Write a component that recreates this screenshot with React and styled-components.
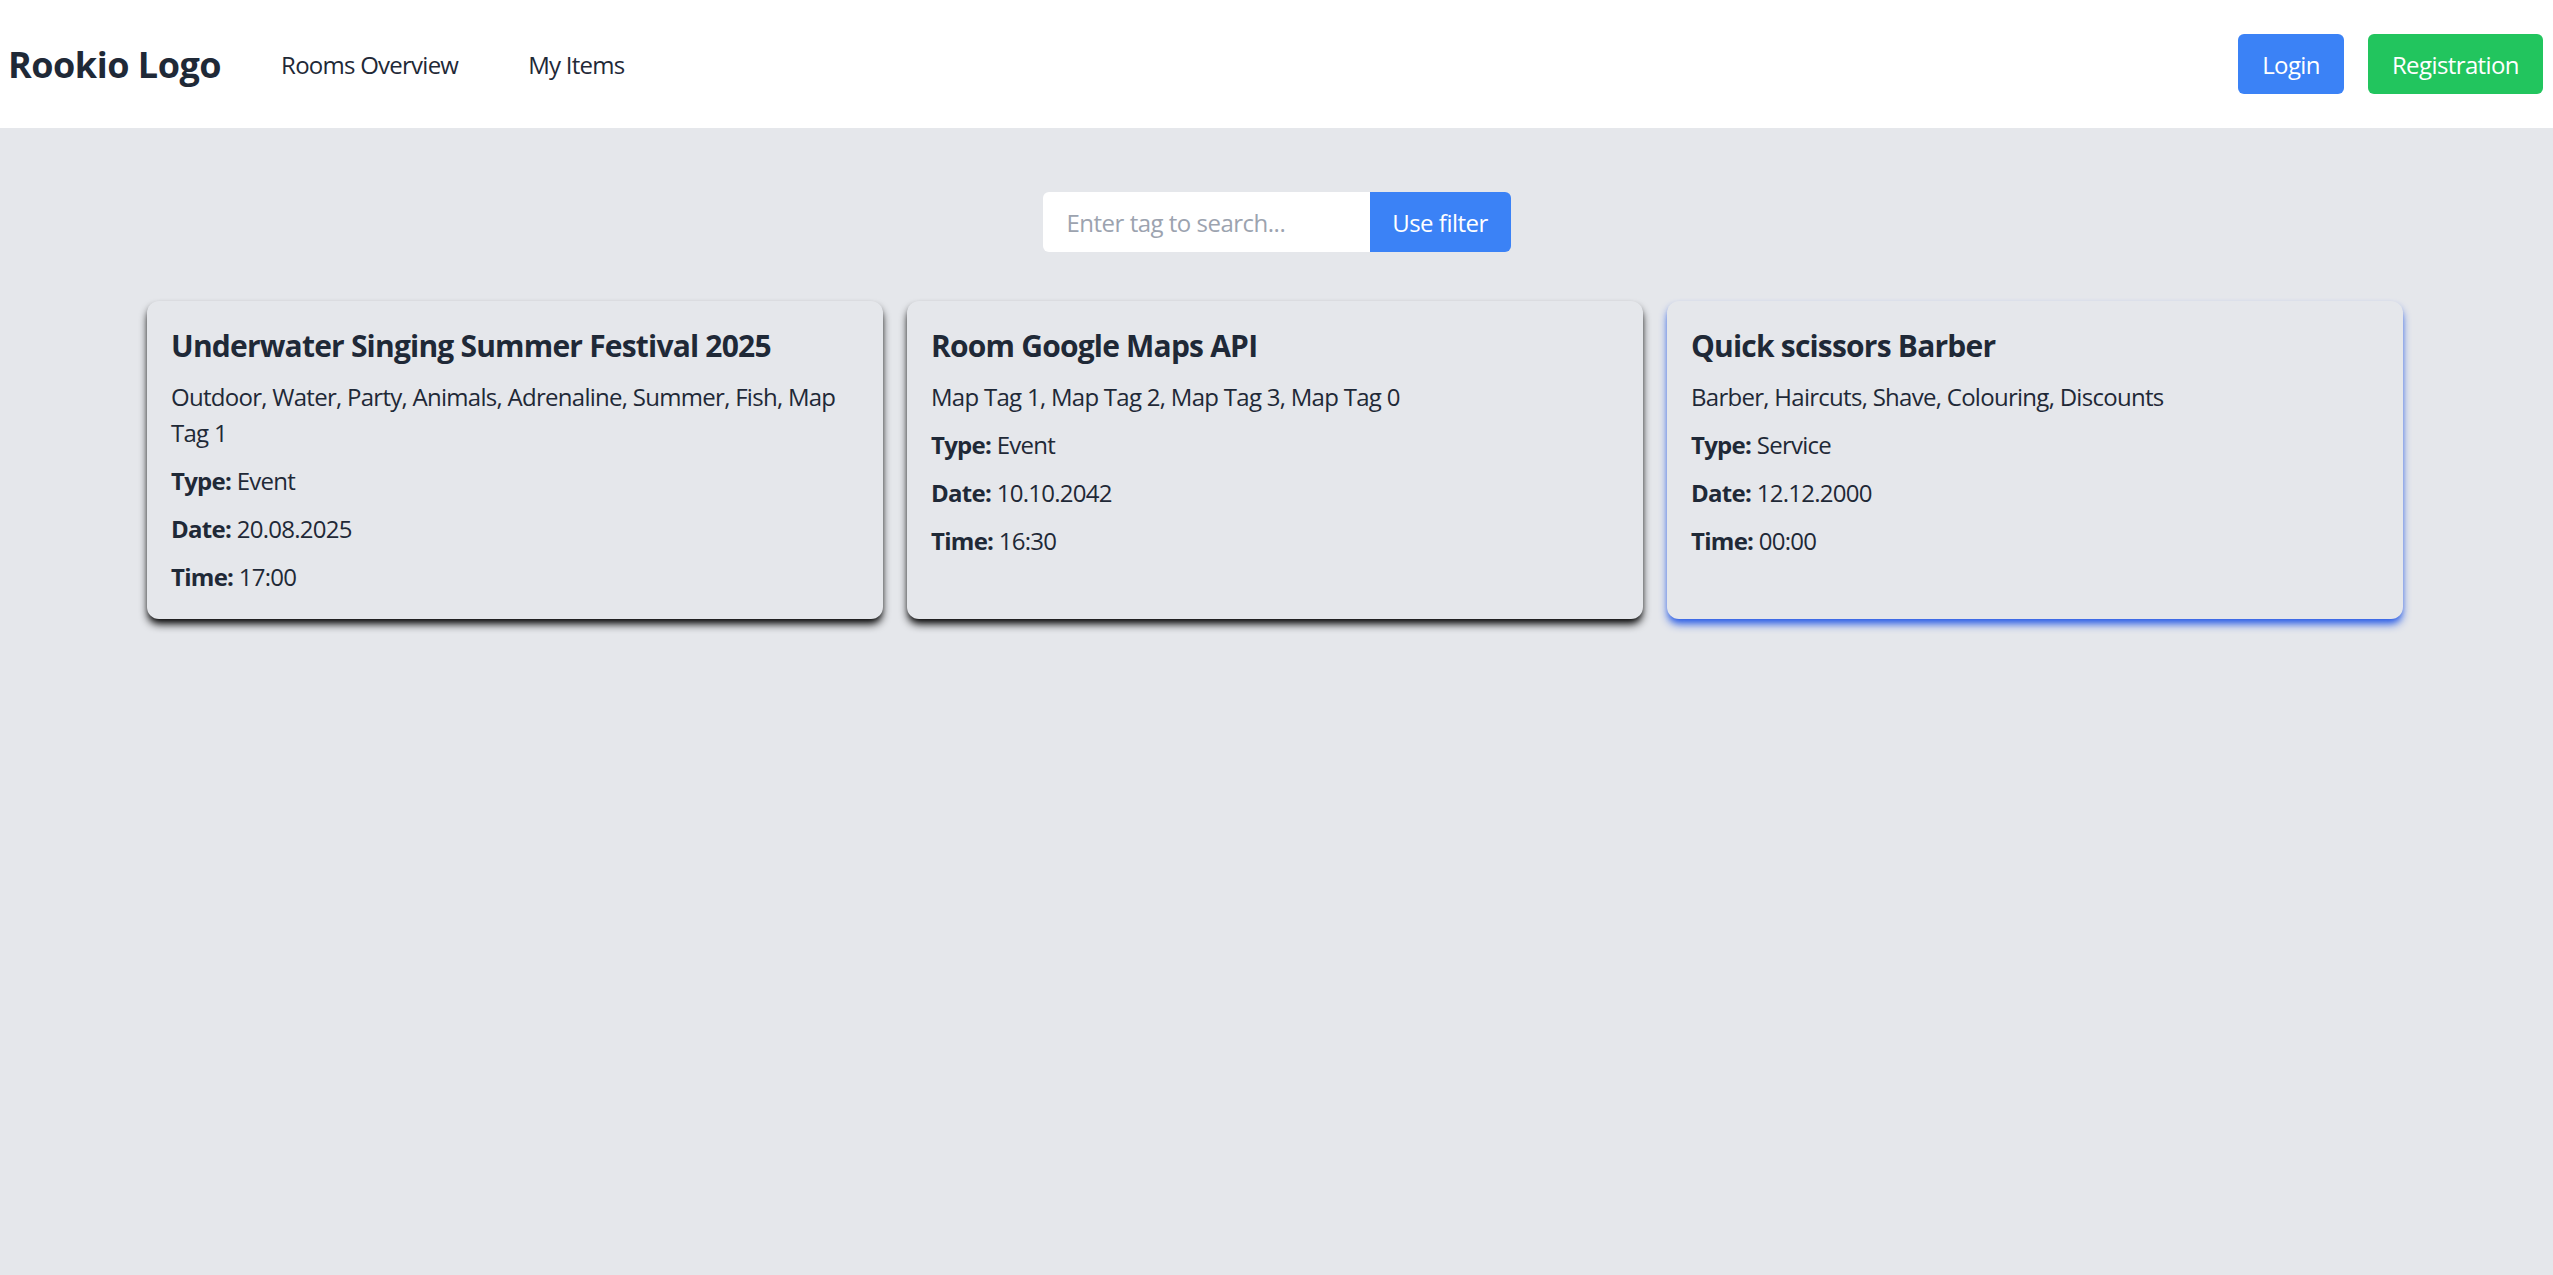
import React from 'react'
import styled, { createGlobalStyle } from 'styled-components';

const GlobalStyle = createGlobalStyle`
    html, body {
        margin: 0;
        padding: 0;
        background: #e5e7eb;
    }
    body {
        font-family: "Open Sans", "Noto Sans", sans-serif;
        color: #1f2937;
    }
    * {
        box-sizing: border-box;
    }
`;

const Page = styled.div`
    min-height: 100vh;
    background: #e5e7eb;
`;

const Header = styled.header`
    height: 128px;
    background: #ffffff;
    display: flex;
    align-items: center;
    justify-content: space-between;
    padding: 0 10px 0 8px;
`;

const Left = styled.div`
    display: flex;
    align-items: center;
`;

const Logo = styled.a`
    font-size: 36px;
    font-weight: 700;
    color: #1f2937;
    text-decoration: none;
    letter-spacing: -0.5px;
`;

const Nav = styled.nav`
    display: flex;
    gap: 70px;
    margin-left: 60px;
`;

const NavLink = styled.a`
    font-size: 24px;
    color: #1f2937;
    text-decoration: none;
    letter-spacing: -0.75px;
`;

const Right = styled.div`
    display: flex;
    gap: 24px;
`;

const Button = styled.button`
    height: 60px;
    padding: 0 24px;
    border: none;
    border-radius: 6px;
    font-family: inherit;
    font-size: 24px;
    color: #ffffff;
    background: ${props => props.$green ? '#22c55e' : '#3b82f6'};
    cursor: pointer;
    letter-spacing: -0.6px;
`;

const SearchRow = styled.div`
    display: flex;
    justify-content: center;
    margin: 64px 0 49px;
`;

const SearchInput = styled.input`
    width: 327px;
    height: 60px;
    padding: 0 24px;
    border: none;
    border-radius: 6px 0 0 6px;
    background: #ffffff;
    font-family: inherit;
    font-size: 24px;
    color: #1f2937;
    outline: none;
    letter-spacing: -0.5px;

    &::placeholder {
        color: #9ca3af;
    }
`;

const SearchButton = styled.button`
    width: 141px;
    height: 60px;
    border: none;
    border-radius: 0 6px 6px 0;
    background: #3b82f6;
    color: #ffffff;
    font-family: inherit;
    font-size: 24px;
    cursor: pointer;
    letter-spacing: -0.5px;
`;

const Grid = styled.div`
    display: grid;
    grid-template-columns: repeat(3, 1fr);
    gap: 24px;
    padding: 0 150px 0 147px;
`;

const Card = styled.div`
    background: #e5e7eb;
    border-radius: 12px;
    padding: 24px;
    box-shadow: ${props => props.$active
        ? '0 6px 9px -1.5px rgba(37, 88, 230, 0.95), 0 3px 6px -3px rgba(37, 88, 230, 0.6)'
        : '0 6px 9px -1.5px rgba(0, 0, 0, 0.95), 0 3px 6px -3px rgba(0, 0, 0, 0.6)'};
`;

const Title = styled.h2`
    margin: 0 0 12px;
    font-size: 30px;
    line-height: 42px;
    font-weight: 700;
    color: #1f2937;
    letter-spacing: -0.8px;
`;

const Line = styled.p`
    margin: 0 0 12px;
    font-size: 24px;
    line-height: 36px;
    color: #1f2937;
    letter-spacing: -0.72px;

    &:last-child {
        margin-bottom: 0;
    }
`;

const rooms = [
    {
        name: 'Underwater Singing Summer Festival 2025',
        tags: 'Outdoor, Water, Party, Animals, Adrenaline, Summer, Fish, Map Tag 1',
        type: 'Event',
        date: '20.08.2025',
        time: '17:00',
    },
    {
        name: 'Room Google Maps API',
        tags: 'Map Tag 1, Map Tag 2, Map Tag 3, Map Tag 0',
        type: 'Event',
        date: '10.10.2042',
        time: '16:30',
    },
    {
        name: 'Quick scissors Barber',
        tags: 'Barber, Haircuts, Shave, Colouring, Discounts',
        type: 'Service',
        date: '12.12.2000',
        time: '00:00',
        active: true,
    },
];

const App = () => {
    return (
        <Page>
            <GlobalStyle />
            <Header>
                <Left>
                    <Logo href="#">Rookio Logo</Logo>
                    <Nav>
                        <NavLink href="#">Rooms Overview</NavLink>
                        <NavLink href="#">My Items</NavLink>
                    </Nav>
                </Left>
                <Right>
                    <Button>Login</Button>
                    <Button $green>Registration</Button>
                </Right>
            </Header>

            <SearchRow>
                <SearchInput placeholder="Enter tag to search..." />
                <SearchButton>Use filter</SearchButton>
            </SearchRow>

            <Grid>
                {rooms.map((room, index) => (
                    <Card key={index} $active={room.active}>
                        <Title>{room.name}</Title>
                        <Line>{room.tags}</Line>
                        <Line><b>Type:</b> {room.type}</Line>
                        <Line><b>Date:</b> {room.date}</Line>
                        <Line><b>Time:</b> {room.time}</Line>
                    </Card>
                ))}
            </Grid>
        </Page>
    )
}

export default App;
